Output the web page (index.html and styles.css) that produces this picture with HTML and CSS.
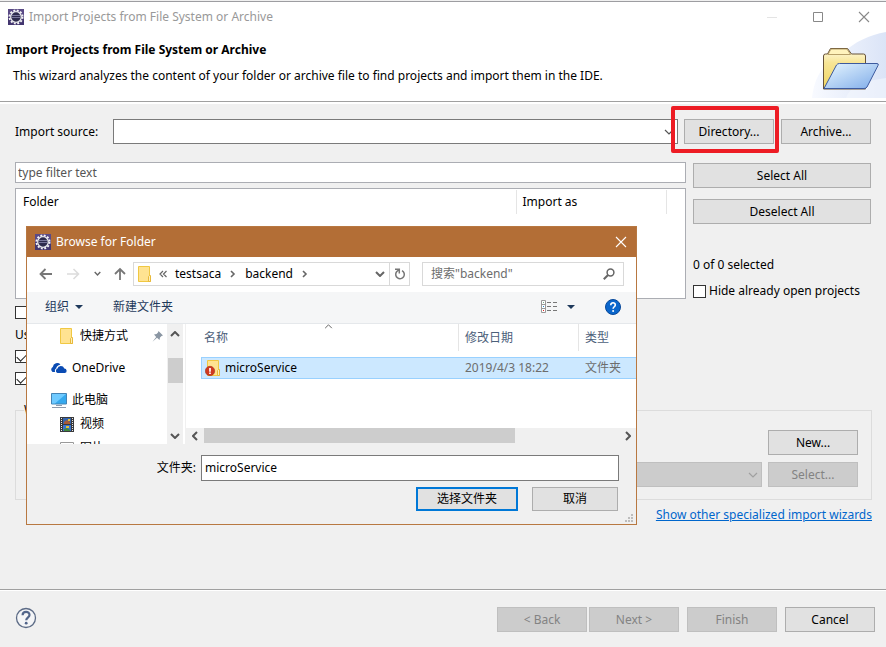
FILE: index.html
```
<!DOCTYPE html>
<html lang="en">
<head>
<meta charset="utf-8">
<title>Import Projects from File System or Archive</title>
<link rel="stylesheet" href="styles.css">
</head>
<body>
<svg class="defs" aria-hidden="true">
  <symbol id="gear" viewBox="0 0 16 16">
    <rect width="16" height="16" fill="#5a4a86"/>
    <rect y="8" width="16" height="8" fill="#43366f"/>
    <circle cx="8" cy="8" r="6.500" fill="none" stroke="#f4f4f4" stroke-width="2" stroke-dasharray="1.900 1.500"/>
    <circle cx="8" cy="8" r="5.300" fill="#2d2a4c" stroke="#e6e6ea" stroke-width="1.300"/>
    <path d="M4 6.500h8M4 8.500h8" stroke="#77759a"/>
  </symbol>
  <symbol id="folder" viewBox="0 0 14 16">
    <path d="M.5.5h11v11h1v4H.5z" fill="#ffe391" stroke="#f0c842"/>
    <path d="M11.5 9.5h1v6h-2v-5z" fill="#fff0b8" stroke="#e8b93a"/>
  </symbol>
  <symbol id="chevron" viewBox="0 0 10 6"><path d="M1 1l4 4 4-4" fill="none" stroke="currentColor" stroke-width="1.2"/></symbol>
  <symbol id="chevron-bold" viewBox="0 0 10 6"><path d="M1 1l4 4 4-4" fill="none" stroke="currentColor" stroke-width="2"/></symbol>
  <symbol id="chevron-right" viewBox="0 0 6 8"><path d="M1 1l3 3-3 3" fill="none" stroke="currentColor" stroke-width="1.6"/></symbol>
  <symbol id="cross" viewBox="0 0 12 12"><path d="M1 1l10 10M11 1L1 11" stroke="currentColor" stroke-width="1.1"/></symbol>
</svg>

<div class="window">
  <header class="titlebar">
    <svg class="app-icon"><use href="#gear"/></svg>
    <span class="title">Import Projects from File System or Archive</span>
    <div class="window-controls">
      <button type="button" aria-label="Minimize" disabled><svg width="12" height="12" viewBox="0 0 12 12"><path d="M1 6.500h10" stroke="#e4e4e4"/></svg></button>
      <button type="button" aria-label="Maximize"><svg width="12" height="12" viewBox="0 0 12 12"><path d="M1.500 1.500h9v9h-9z" fill="none" stroke="#888"/></svg></button>
      <button type="button" aria-label="Close"><svg width="12" height="12"><use href="#cross"/></svg></button>
    </div>
  </header>

  <section class="banner">
    <div>
      <h1>Import Projects from File System or Archive</h1>
      <p>This wizard analyzes the content of your folder or archive file to find projects and import them in the IDE.</p>
    </div>
    <svg class="banner-art" viewBox="0 0 75 68" aria-hidden="true">
      <defs>
        <linearGradient id="haze" x1="0" x2="1"><stop offset="0" stop-color="#f8faff"/><stop offset="1" stop-color="#dbe4f7"/></linearGradient>
        <linearGradient id="back" x1="0" y1="0" x2="0" y2="1"><stop offset="0" stop-color="#fffbe5"/><stop offset=".35" stop-color="#f7e596"/><stop offset="1" stop-color="#efd45f"/></linearGradient>
        <linearGradient id="front" x1="0" y1="0" x2="1" y2="1"><stop offset="0" stop-color="#e8f7ff"/><stop offset="1" stop-color="#7eabe9"/></linearGradient>
      </defs>
      <path d="M1 66C4 44 10 35 29 23C45 9 58 3 75 0v66z" fill="url(#haze)"/>
      <path d="M35 66C40 52 55 49 75 46v20z" fill="#f4f7fd" opacity=".6"/>
      <path d="M12.500 57V24q0-2 2-2h2l3-5.500h17l4 5.500h12q2 0 2 2v33z" fill="url(#back)" stroke="#665238"/>
      <path d="M17 22.500l3-5.500h16l3.500 5.500z" fill="#fff3bd" stroke="#a48a53" stroke-width=".8"/>
      <path d="M13 56.500L25.500 33q1-1.500 3-1.500H66q2 0 1 2L56 55q-1 1.500-3 1.500z" fill="url(#front)" stroke="#3d5a9e"/>
    </svg>
  </section>

  <main class="content">
    <div class="source-row">
      <label for="source">Import source:</label>
      <div class="combo">
        <select id="source"><option></option></select>
        <svg class="combo-arrow"><use href="#chevron"/></svg>
      </div>
      <div class="marked"><button type="button" class="btn">Directory...</button></div>
      <button type="button" class="btn">Archive...</button>
    </div>

    <div class="columns">
      <div class="left">
        <input class="filter" type="text" placeholder="type filter text" aria-label="Filter">
        <div class="tree">
          <table>
            <thead><tr><th class="col-folder">Folder</th><th class="col-import">Import as</th><th class="col-rest"></th></tr></thead>
          </table>
        </div>
      </div>
      <div class="right">
        <button type="button" class="btn">Select All</button>
        <button type="button" class="btn second">Deselect All</button>
        <p class="count">0 of 0 selected</p>
        <label class="check"><input type="checkbox">Hide already open projects</label>
      </div>
    </div>

    <div class="options">
      <input type="checkbox" aria-label="Close projects">
      <p>Us</p>
      <input type="checkbox" aria-label="Nested projects" checked>
      <input type="checkbox" aria-label="Project natures" checked>
    </div>

    <fieldset class="sets">
      <legend>W</legend>
      <button type="button" class="btn new">New...</button>
      <div class="combo off">
        <select aria-label="Working sets" disabled><option></option></select>
        <svg class="combo-arrow"><use href="#chevron"/></svg>
      </div>
      <button type="button" class="btn" disabled>Select...</button>
    </fieldset>
    <a class="wizards" href="#">Show other specialized import wizards</a>
  </main>

  <footer class="footer">
    <button type="button" class="help" aria-label="Help">
      <svg width="22" height="22" viewBox="0 0 22 22"><circle cx="11" cy="11" r="9.500" fill="#f4f5f7" stroke="#5c6b86" stroke-width="1.300"/><path d="M7.600 8.300C7.600 3.800 14.600 4 14.500 8c0 2.600-3.300 2.700-3.300 5.200" fill="none" stroke="#52658a" stroke-width="2.200"/><circle cx="11.200" cy="16.200" r="1.400" fill="#52658a"/></svg>
    </button>
    <div class="pair">
      <button type="button" class="btn" disabled>&lt; Back</button>
      <button type="button" class="btn" disabled>Next &gt;</button>
    </div>
    <button type="button" class="btn" disabled>Finish</button>
    <button type="button" class="btn">Cancel</button>
  </footer>

  <div class="dialog" role="dialog" aria-label="Browse for Folder" lang="zh-CN">
    <header class="dialog-title">
      <svg class="app-icon"><use href="#gear"/></svg>
      <span>Browse for Folder</span>
      <button type="button" aria-label="Close"><svg width="12" height="12"><use href="#cross"/></svg></button>
    </header>

    <nav class="nav">
      <div class="arrows">
        <button type="button" aria-label="Back"><svg width="14" height="12" viewBox="0 0 14 12"><path d="M13 6H2M6.500 1L1.500 6l5 5" fill="none" stroke="#777" stroke-width="1.800"/></svg></button>
        <button type="button" aria-label="Forward"><svg width="14" height="12" viewBox="0 0 14 12"><path d="M1 6h11M7.500 1l5 5-5 5" fill="none" stroke="#dcdcdc" stroke-width="1.600"/></svg></button>
        <button type="button" aria-label="Recent"><svg width="7" height="5"><use href="#chevron-bold"/></svg></button>
        <button type="button" aria-label="Up"><svg width="12" height="14" viewBox="0 0 12 14"><path d="M6 13V2M1 7l5-5 5 5" fill="none" stroke="#777" stroke-width="1.800"/></svg></button>
      </div>
      <div class="address">
        <svg width="14" height="16"><use href="#folder"/></svg>
        <svg class="laquo" width="8" height="8" viewBox="0 0 8 8"><path d="M4 1L1 4l3 3M7.500 1l-3 3 3 3" fill="none" stroke="#666" stroke-width="1.200"/></svg>
        <span>testsaca</span>
        <svg class="crumb" width="6" height="8"><use href="#chevron-right"/></svg>
        <span>backend</span>
        <svg class="crumb" width="6" height="8"><use href="#chevron-right"/></svg>
        <svg class="drop" width="10" height="6"><use href="#chevron-bold"/></svg>
        <button type="button" aria-label="Refresh"><svg width="12" height="12" viewBox="0 0 12 12"><path d="M8 2.600A4.300 4.300 0 1 1 2.600 3.800L4.800 1.800M1 1.200h4.300v4.300" fill="none" stroke="#777" stroke-width="1.500"/></svg></button>
      </div>
      <div class="search">
        <input type="text" placeholder='搜索"backend"' aria-label="搜索">
        <svg width="12" height="12" viewBox="0 0 12 12"><circle cx="7.500" cy="4.500" r="3.400" fill="none" stroke="#666" stroke-width="1.500"/><path d="M5 7L.8 11.200" stroke="#666" stroke-width="2"/></svg>
      </div>
    </nav>

    <div class="toolbar">
      <button type="button">组织<svg width="8" height="4" viewBox="0 0 8 4"><path d="M0 0h8L4 4z" fill="#1e395b"/></svg></button>
      <button type="button" class="new-folder">新建文件夹</button>
      <button type="button" class="view" aria-label="View">
        <svg width="17" height="13" viewBox="0 0 17 13"><path d="M.5.5h4v12h-4zM.5 4.500h4M.5 8.500h4" fill="#fff" stroke="#999"/><path d="M6 2.500h4M12 2.500h4M6 6.500h4M12 6.500h4M6 10.500h4M12 10.500h4" stroke="#777"/><path d="M2 2h1v1H2z" fill="#7a8"/><path d="M2 6h1v1H2z" fill="#28c"/><path d="M2 10h1v1H2z" fill="#d22"/></svg>
        <svg width="8" height="4" viewBox="0 0 8 4"><path d="M0 0h8L4 4z" fill="#1e395b"/></svg>
      </button>
      <button type="button" class="info" aria-label="Help">
        <svg width="16" height="16" viewBox="0 0 16 16"><circle cx="8" cy="8" r="7.500" fill="#0a66cc" stroke="#07489a"/><path d="M5.800 6.200C5.600 2.800 10.500 3 10.300 6c0 1.700-2.200 1.800-2.200 3.800" fill="none" stroke="#fff" stroke-width="1.600"/><circle cx="8.100" cy="12" r="1" fill="#fff"/></svg>
      </button>
    </div>

    <div class="panes">
      <ul class="places">
        <li class="sub"><svg width="14" height="16"><use href="#folder"/></svg><span>快捷方式</span>
          <svg class="pin" width="11" height="11" viewBox="0 0 11 11"><path d="M6.500 0L11 4.500 9.500 5 8 6.500 7.500 9 5 6.700.5 10.800 4.200 6 2 3.500 4.500 3 6 1.500z" fill="#8a96a3"/></svg></li>
        <li class="root"><svg width="16" height="10" viewBox="0 0 16 10"><path d="M1.500 9A3 3 0 0 1 1.800 3.900 4.500 4.500 0 0 1 9.500 1.500C6.500 2 5.300 4 5.300 5.500 4 6 3.500 7.500 4.200 9z" fill="#0a4bb3"/><path d="M6.500 10A2.300 2.300 0 0 1 6.300 5.700 3.700 3.700 0 0 1 13.300 5.500 2.300 2.300 0 0 1 14 10z" fill="#0a4bb3"/></svg><span>OneDrive</span></li>
        <li class="root"><svg width="16" height="15" viewBox="0 0 16 15"><path d="M.5.500h15v10.500H.5z" fill="#35a9ee" stroke="#4584b5"/><path d="M1 1h14L4 10.500H1z" fill="#6fcaff"/><path d="M5 12.500h6M1 14.500h14" stroke="#8d9bad"/></svg><span>此电脑</span></li>
        <li class="sub"><svg width="14" height="15" viewBox="0 0 14 15"><path d="M0 0h14v15H0z" fill="#3a3a3c"/><path d="M1.500 1v14M12.500 1v14" stroke="#e8e8e8" stroke-dasharray="1 1"/><path d="M3 1h8v6H3z" fill="#3564ad"/><path d="M3 8h8v6H3z" fill="#3974d0"/><path d="M4 5l3-2 3 2v2H4z" fill="#a65b38"/><path d="M8 2h2v2H8zM6 9h3v2H6z" fill="#e4c339"/><path d="M4 12l3-1 3 2v1H4z" fill="#3f873e"/></svg><span>视频</span></li>
        <li class="sub"><svg width="14" height="13" viewBox="0 0 14 13"><path d="M.5.500h13v12H.5z" fill="#fff" stroke="#999"/></svg><span>图片</span></li>
      </ul>
      <div class="vscroll">
        <svg width="10" height="6" class="flip"><use href="#chevron-bold"/></svg>
        <i></i>
        <svg width="10" height="6"><use href="#chevron-bold"/></svg>
      </div>
      <div class="files">
        <svg class="sorted" width="9" height="5"><use href="#chevron"/></svg>
        <table>
          <thead><tr><th class="c-name">名称</th><th class="c-date">修改日期</th><th>类型</th></tr></thead>
          <tbody><tr>
            <td><div class="file"><svg width="16" height="16" viewBox="0 0 16 16"><path d="M2.500.500h11v11h1v4h-12z" fill="#ffe391" stroke="#f0c842"/><path d="M13.500 9.500h1v6h-2v-5z" fill="#fff0b8" stroke="#e8b93a"/><circle cx="5" cy="11" r="4.700" fill="#cf3a20" stroke="#a32d1a" stroke-width=".6"/><path d="M5 8v3.700M5 12.500V14" stroke="#fff" stroke-width="1.700"/></svg>microService</div></td>
            <td>2019/4/3 18:22</td><td>文件夹</td>
          </tr></tbody>
        </table>
        <div class="hscroll">
          <svg width="6" height="10" viewBox="0 0 6 10"><path d="M5 1L1 5l4 4" fill="none" stroke="#555" stroke-width="2"/></svg>
          <div class="track"><i></i></div>
          <svg width="6" height="10" viewBox="0 0 6 10"><path d="M1 1l4 4-4 4" fill="none" stroke="#555" stroke-width="2"/></svg>
        </div>
      </div>
    </div>

    <div class="name-row">
      <label for="name">文件夹:</label>
      <input id="name" type="text" value="microService">
    </div>
    <div class="actions">
      <button type="button" class="btn primary">选择文件夹</button>
      <button type="button" class="btn">取消</button>
    </div>
    <svg class="grip" width="8" height="8" viewBox="0 0 8 8"><path d="M6 0h2v2H6zM3 3h2v2H3zM6 3h2v2H6zM0 6h2v2H0zM3 6h2v2H3zM6 6h2v2H6z" fill="#bdbdbd"/></svg>
  </div>
</div>
</body>
</html>
```
FILE: styles.css
```
* { box-sizing: border-box; }
body {
  margin: 0;
  background: #f0f0f0;
  color: #000;
  font: 12px/18px "Noto Sans", "Noto Sans CJK SC", sans-serif;
}
h1, p, ul { margin: 0; padding: 0; }
button, input, select { font: inherit; color: inherit; }
button { border: 0; padding: 0; background: none; display: flex; align-items: center; justify-content: center; }
svg { display: block; flex: none; }
table { border-collapse: collapse; table-layout: fixed; width: 100%; }
th, td { padding: 0; text-align: left; font-weight: normal; }
.defs { position: absolute; width: 0; height: 0; }

.window { position: relative; min-height: 100vh; display: flex; flex-direction: column; padding-top: 1px; background: #f0f0f0; }
.app-icon { width: 16px; height: 16px; }

.titlebar { display: flex; align-items: center; height: 31px; border-top: 1px solid #9d9da1; background: #fff; padding-left: 8px; color: #999; }
.title { margin-left: 5px; flex: 1; }
.window-controls { display: flex; margin-right: -1px; color: #888; }
.window-controls button { width: 46px; height: 28px; }

.banner { display: flex; justify-content: space-between; height: 70px; background: #fff; border-bottom: 1px solid #a0a0a0; }
.banner h1 { font-size: 12px; line-height: 18px; font-weight: bold; padding: 9px 0 0 6px; }
.banner p { padding: 8px 0 0 13px; }
.banner-art { width: 75px; height: 68px; }

.content { flex: 1; padding: 15px 15px 0; border-top: 2px solid #fff; }
.btn { min-width: 90px; height: 25px; border: 1px solid #adadad; background: #e1e1e1; }
.btn:disabled { border-color: #bfbfbf; background: #ccc; color: #838383; }

.source-row { display: flex; align-items: center; height: 25px; }
.source-row label { width: 98px; }
.combo { position: relative; flex: 1; height: 25px; }
.combo select { width: 100%; height: 100%; appearance: none; border: 1px solid #7a7a7a; border-radius: 0; background: #fff; padding: 0 4px; display: block; }
.combo-arrow { position: absolute; right: 4px; top: 10px; width: 10px; height: 6px; color: #555; }
.combo.off select { background: #ccc; border-color: #bfbfbf; opacity: 1; }
.combo.off .combo-arrow { color: #a0a0a0; }
.marked { position: relative; margin: 0 7px 0 6px; }
.marked::after { content: ""; position: absolute; inset: -13px -5px -9px -13px; border: 4px solid #ed1c24; border-radius: 2px; pointer-events: none; }

.columns { display: flex; gap: 7px; margin-top: 18px; }
.left { flex: 1; }
.filter { display: block; width: 100%; height: 21px; border: 1px solid #abadb3; padding: 0 2px; background: #fff; }
.filter::placeholder { color: #555; opacity: 1; }
.tree { height: 111px; margin-top: 5px; border: 1px solid #abadb3; background: #fff; padding-top: 1px; }
.tree th { height: 24px; padding-left: 7px; }
.tree .col-import { width: 150px; padding-left: 6px; border-left: 1px solid #e5e5e5; }
.tree .col-rest { width: 19px; border-left: 1px solid #e5e5e5; }
.right { width: 178px; padding-top: 1px; }
.right .btn { width: 100%; }
.right .second { margin-top: 11px; }
.count { margin-top: 32px; }
.check { display: flex; align-items: center; gap: 3px; margin-top: 8px; white-space: nowrap; }
input[type="checkbox"] { appearance: none; flex: none; display: block; width: 13px; height: 13px; margin: 0; border: 1px solid #333; background: #fff; }
input[type="checkbox"]:checked::before { content: ""; display: block; width: 9px; height: 5px; margin: 2px 1px; border-left: 1px solid #222; border-bottom: 1px solid #222; transform: rotate(-45deg); }

.options { display: flex; flex-direction: column; gap: 9px; margin-top: 6px; }
.options p { height: 13px; line-height: 14px; }
.sets { display: grid; grid-template-columns: 1fr 90px; gap: 7px 6px; margin: 16px -1px 0 0; padding: 11px 13px 12px; border: 1px solid #dcdcdc; min-width: 0; }
.sets legend { height: 18px; padding: 0; margin-left: -5px; }
.sets .new { grid-column: 2; }
.wizards { display: block; width: max-content; margin: 6px -1px 0 auto; color: #0066cc; text-decoration: underline; }

.footer { display: flex; align-items: center; gap: 8px; height: 58px; padding: 2px 11px 0 15px; border-top: 1px solid #a0a0a0; box-shadow: inset 0 1px #fff; }
.help { margin: 0 auto 3px 0; }
.pair { display: flex; gap: 2px; }

/* Folder picker floating over the wizard */
.dialog { position: absolute; left: 26px; top: 226px; width: 611px; border: 1px solid #b87841; background: #f0f0f0; }
.dialog-title { display: flex; align-items: center; gap: 5px; height: 30px; padding: 0 9px 1px 8px; background: #b36e36; color: #fff; }
.dialog-title button { margin-left: auto; color: #fff; }
.nav { display: flex; align-items: center; height: 35px; padding: 0 12px 2px 0; background: #fff; color: #666; }
.arrows { display: flex; align-items: center; justify-content: space-between; width: 106px; padding: 0 7px 0 12px; }
.address { display: flex; align-items: center; flex: 1; height: 24px; margin-right: 12px; border: 1px solid #d9d9d9; padding-left: 4px; }
.address span { color: #000; }
.laquo { margin: 0 8px 0 7px; }
.crumb { margin: 0 9px; }
.drop { margin-left: auto; margin-right: 4px; }
.address button { width: 20px; height: 22px; border-left: 1px solid #d9d9d9; }
.search { display: flex; align-items: center; width: 202px; height: 24px; border: 1px solid #d9d9d9; padding: 0 8px; }
.search input { flex: 1; min-width: 0; border: 0; padding: 0; background: none; outline: 0; }
.search input::placeholder { color: #6d6d6d; opacity: 1; }
.toolbar { display: flex; align-items: center; height: 32px; padding: 0 15px 2px 18px; background: #f5f6f7; border-bottom: 1px solid #e5e8eb; color: #1e395b; }
.toolbar button { gap: 6px; }
.toolbar .new-folder { margin-left: 30px; }
.toolbar .view { margin-left: auto; gap: 9px; }
.toolbar .info { margin-left: 30px; }

.panes { display: flex; height: 120px; }
.places { width: 140px; overflow: hidden; background: #fff; list-style: none; }
.places li { display: flex; align-items: center; height: 24px; }
.places .sub { padding-left: 33px; gap: 6px; }
.places .root { margin-top: 8px; padding-left: 24px; gap: 5px; }
.places .pin { margin-left: auto; margin-right: 4px; }
.vscroll { display: flex; flex-direction: column; align-items: center; width: 16px; margin-right: 2px; padding: 7px 0 5px; background: #f0f0f0; box-shadow: 2px 0 #fff; color: #555; }
.vscroll i { width: 15px; height: 25px; margin: 21px 0 auto; background: #cdcdcd; }
.flip { transform: rotate(180deg); }
.files { position: relative; display: flex; flex-direction: column; flex: 1; min-width: 0; border-left: 1px solid #f0f0f0; background: #fff; }
.files table { width: auto; margin-left: 15px; border-collapse: separate; border-spacing: 0; }
.files th { height: 27px; padding-left: 6px; border-left: 1px solid #e5e5e5; color: #4c607a; }
.files .c-name { width: 257px; padding-left: 3px; border-left: 0; }
.files .c-date { width: 120px; }
.files thead::after { content: ""; display: table-row; height: 6px; }
.files td { height: 22px; padding-left: 7px; background: #cce8ff; border: solid #99d1ff; border-width: 1px 0; color: #6d6d6d; }
.files td:first-child { border-left-width: 1px; padding-left: 3px; color: #000; }
.file { display: flex; align-items: center; gap: 4px; }
.sorted { position: absolute; left: 138px; top: 0; transform: rotate(180deg); color: #666; }
.hscroll { display: flex; align-items: center; height: 16px; margin-top: auto; padding: 0 5px 0 6px; background: #f0f0f0; }
.track { flex: 1; height: 16px; margin: 0 6px; padding-bottom: 1px; }
.track i { display: block; width: 75%; height: 100%; background: #cdcdcd; }

.name-row { display: flex; align-items: center; margin-top: 11px; padding-right: 17px; }
.name-row label { width: 174px; padding-right: 5px; text-align: right; }
.name-row input { flex: 1; min-width: 0; height: 26px; border: 1px solid #7a7a7a; background: #fff; padding: 0 3px 2px; }
.actions { display: flex; justify-content: flex-end; gap: 14px; padding: 6px 18px 13px 0; }
.actions .btn { min-width: 86px; height: 24px; }
.actions .primary { min-width: 102px; border: 2px solid #0078d7; }
.grip { position: absolute; right: 3px; bottom: 2px; }
```
